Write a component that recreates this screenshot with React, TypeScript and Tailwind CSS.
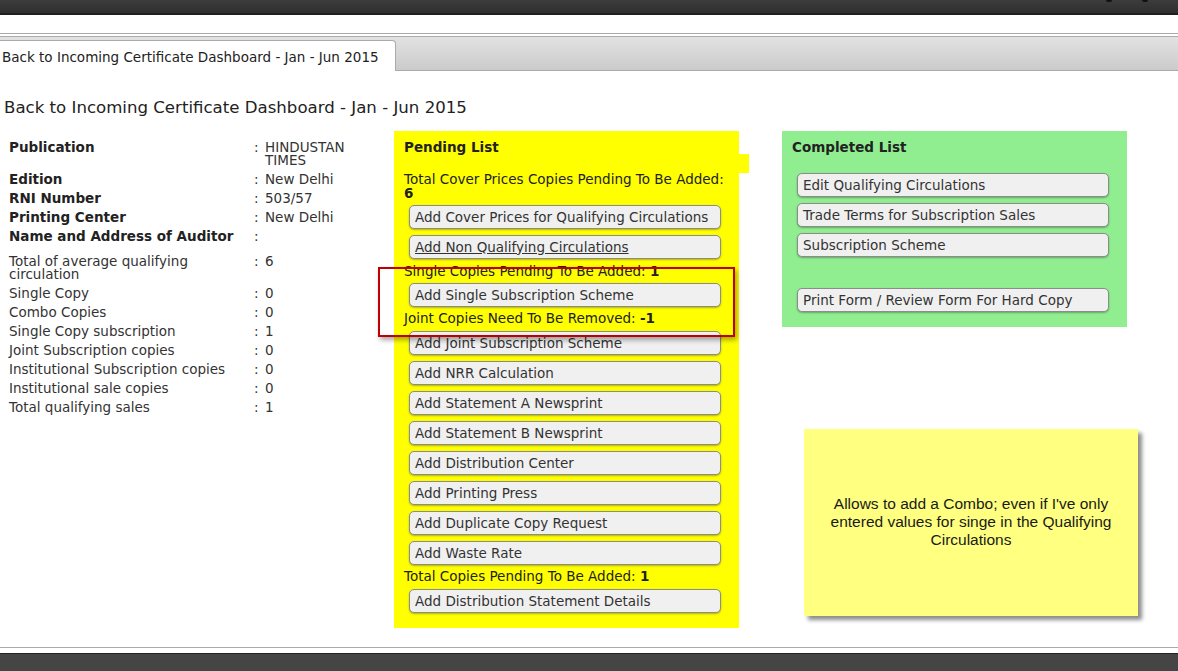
import React from "react";

const info = [
  { label: "Publication", value: "HINDUSTAN TIMES", bold: true },
  { label: "Edition", value: "New Delhi", bold: true },
  { label: "RNI Number", value: "503/57", bold: true },
  { label: "Printing Center", value: "New Delhi", bold: true },
  { label: "Name and Address of Auditor", value: "", bold: true },
];

const stats = [
  { label: "Total of average qualifying circulation", value: "6" },
  { label: "Single Copy", value: "0" },
  { label: "Combo Copies", value: "0" },
  { label: "Single Copy subscription", value: "1" },
  { label: "Joint Subscription copies", value: "0" },
  { label: "Institutional Subscription copies", value: "0" },
  { label: "Institutional sale copies", value: "0" },
  { label: "Total qualifying sales", value: "1" },
];

function Btn({ children, className = "", underline = false }: { children: React.ReactNode; className?: string; underline?: boolean }) {
  return (
    <button
      className={`block w-[312px] h-[24px] ml-[5px] rounded-[5px] border border-[#8c8c8c] bg-[#f0f0f0] pl-[5px] text-left text-[13.5px] leading-[13px] text-[#333] shadow-[0_1px_2px_rgba(0,0,0,0.3)] ${underline ? "underline" : ""} ${className}`}
    >
      {children}
    </button>
  );
}

function InfoRow({ label, value, bold, className = "" }: { label: string; value: string; bold?: boolean; className?: string }) {
  return (
    <div className={`flex text-[13.5px] leading-[13px] ${className}`}>
      <div className={`w-[245px] pr-4 ${bold ? "font-bold text-[#222]" : "text-[#333]"}`}>{label}</div>
      <div className="w-[11px] text-[#333]">:</div>
      <div className="w-[90px] text-[#333]">{value}</div>
    </div>
  );
}

export default function App() {
  return (
    <div className="min-h-[671px] bg-white text-[13.5px] text-[#333]" style={{ fontFamily: '"DejaVu Sans", Verdana, sans-serif' }}>
      {/* top bar */}
      <div className="h-[15px] bg-gradient-to-b from-[#3c3c3c] to-[#2f2f2f] border-b-2 border-[#1f1f1f] flex justify-end">
        <span className="mr-[30px] h-[2px] w-[6px] rounded-b-full bg-[#111]" />
        <span className="mr-[30px] h-[2px] w-[6px] rounded-b-full bg-[#111]" />
      </div>

      <div className="h-[18px]" />
      <div className="border-t border-[#aaa] h-[3px]" />

      {/* tab strip */}
      <div className="h-[35px] border-t border-b border-[#aaa] bg-gradient-to-b from-[#e2e2e2] to-[#cbcbcb] flex items-end">
        <div className="h-[31px] w-[396px] -mb-px bg-white border-t border-r border-[#aaa] rounded-tr-[4px] pl-[2px] pt-[10px] leading-[13px] text-[#222]">
          Back to Incoming Certificate Dashboard - Jan - Jun 2015
        </div>
      </div>

      <div className="pt-[27px] pl-[4px] text-[16.6px] leading-[20px] text-[#222]">
        Back to Incoming Certificate Dashboard - Jan - Jun 2015
      </div>

      {/* main */}
      <div className="relative mt-[13px] flex items-start">
        {/* left info */}
        <div className="w-[394px] pl-[9px] pt-[10px]">
          <div className="flex flex-col gap-[6px]">
            {info.map((r) => (
              <InfoRow key={r.label} {...r} />
            ))}
          </div>
          <div className="mt-[12px] flex flex-col gap-[6px]">
            {stats.map((r) => (
              <InfoRow key={r.label} {...r} />
            ))}
          </div>
        </div>

        {/* pending list */}
        <div className="w-[345px] bg-[#ffff00] pt-[10px] pl-[10px] pb-[15px] text-[#222]">
          <div className="font-bold leading-[13px]">Pending List</div>
          <div className="h-[19px] -mr-[10px] bg-[#ffff00]" />
          <div className="leading-[13.5px]">
            Total Cover Prices Copies Pending To Be Added:
            <br />
            <b>6</b>
          </div>
          <Btn className="mt-[5px]">Add Cover Prices for Qualifying Circulations</Btn>
          <Btn className="mt-[6px]" underline>Add Non Qualifying Circulations</Btn>
          <div className="mt-[6px] leading-[13px]">
            Single Copies Pending To Be Added: <b>1</b>
          </div>
          <Btn className="mt-[5px]">Add Single Subscription Scheme</Btn>
          <div className="mt-[5px] leading-[13px]">
            Joint Copies Need To Be Removed: <b>-1</b>
          </div>
          <Btn className="mt-[6px]">Add Joint Subscription Scheme</Btn>
          <Btn className="mt-[6px]">Add NRR Calculation</Btn>
          <Btn className="mt-[6px]">Add Statement A Newsprint</Btn>
          <Btn className="mt-[6px]">Add Statement B Newsprint</Btn>
          <Btn className="mt-[6px]">Add Distribution Center</Btn>
          <Btn className="mt-[6px]">Add Printing Press</Btn>
          <Btn className="mt-[6px]">Add Duplicate Copy Request</Btn>
          <Btn className="mt-[6px]">Add Waste Rate</Btn>
          <div className="mt-[5px] leading-[13px]">
            Total Copies Pending To Be Added: <b>1</b>
          </div>
          <Btn className="mt-[6px]">Add Distribution Statement Details</Btn>
        </div>

        {/* right column */}
        <div className="ml-[43px] flex flex-col">
          <div className="w-[345px] bg-[#90ee90] pt-[10px] pl-[10px] pb-[15px] text-[#222]">
            <div className="font-bold leading-[13px]">Completed List</div>
            <Btn className="mt-[19px]">Edit Qualifying Circulations</Btn>
            <Btn className="mt-[6px]">Trade Terms for Subscription Sales</Btn>
            <Btn className="mt-[6px]">Subscription Scheme</Btn>
            <Btn className="mt-[31px]">Print Form / Review Form For Hard Copy</Btn>
          </div>

          <div
            className="ml-[22px] mt-[102px] flex h-[187px] w-[334px] items-center justify-center bg-[#ffff80] px-[20px] pb-[2px] text-center text-[15.5px] leading-[18px] text-[#1a1a1a] shadow-[4px_4px_4px_rgba(0,0,0,0.45)]"
            style={{ fontFamily: '"Liberation Sans", Arial, sans-serif' }}
          >
            Allows to add a Combo; even if I've only entered values for singe in the Qualifying Circulations
          </div>
        </div>

        {/* red highlight annotation */}
        <div className="pointer-events-none absolute left-[378px] top-[136px] h-[70px] w-[357px] border-2 border-[#c00000] shadow-[2px_3px_5px_rgba(0,0,0,0.35)]" />
      </div>

      {/* footer */}
      <div className="mt-[19px] border-t border-[#aaa] h-[6px]" />
      <div className="h-[18px] border-t border-[#222] bg-[#454545]" />
    </div>
  );
}
